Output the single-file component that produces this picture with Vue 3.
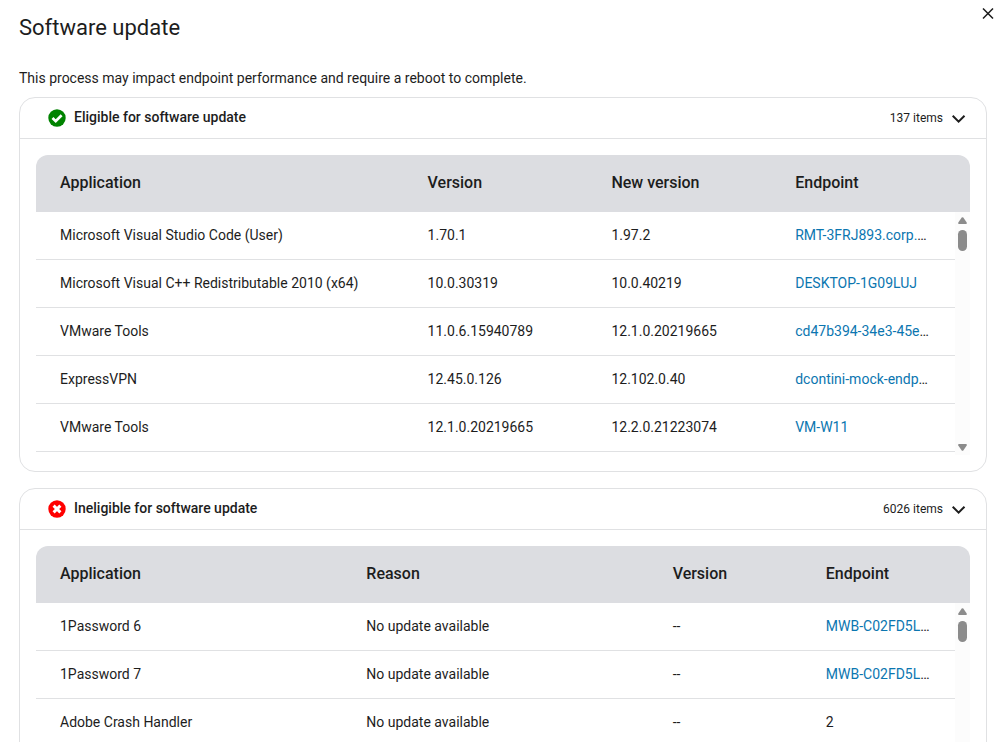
<script setup>
const sections = [
  {
    id: 'eligible',
    ok: true,
    title: 'Eligible for software update',
    count: '137 items',
    columns: [
      { label: 'Application', share: 40 },
      { label: 'Version', share: 20 },
      { label: 'New version', share: 20 },
      { label: 'Endpoint', share: 20 },
    ],
    rows: [
      { cells: ['Microsoft Visual Studio Code (User)', '1.70.1', '1.97.2'], link: 'RMT-3FRJ893.corp.', cut: true },
      { cells: ['Microsoft Visual C++ Redistributable 2010 (x64)', '10.0.30319', '10.0.40219'], link: 'DESKTOP-1G09LUJ' },
      { cells: ['VMware Tools', '11.0.6.15940789', '12.1.0.20219665'], link: 'cd47b394-34e3-45e', cut: true },
      { cells: ['ExpressVPN', '12.45.0.126', '12.102.0.40'], link: 'dcontini-mock-endp', cut: true },
      { cells: ['VMware Tools', '12.1.0.20219665', '12.2.0.21223074'], link: 'VM-W11' },
    ],
  },
  {
    id: 'ineligible',
    ok: false,
    title: 'Ineligible for software update',
    count: '6026 items',
    columns: [
      { label: 'Application', share: 33.333 },
      { label: 'Reason', share: 33.333 },
      { label: 'Version', share: 16.667 },
      { label: 'Endpoint', share: 16.667 },
    ],
    rows: [
      { cells: ['1Password 6', 'No update available', '--'], link: 'MWB-C02FD5L', cut: true },
      { cells: ['1Password 7', 'No update available', '--'], link: 'MWB-C02FD5L', cut: true },
      { cells: ['Adobe Crash Handler', 'No update available', '--', '2'] },
    ],
  },
]
</script>

<template>
  <main class="dialog">
    <header class="top">
      <h1>Software update</h1>
      <button class="close" type="button" aria-label="Close">
        <svg width="12" height="12" viewBox="0 0 12 12" aria-hidden="true">
          <path d="M1 .5L11 10.5M11 .5L1 10.5" fill="none" stroke="currentColor" stroke-width="1.5" />
        </svg>
      </button>
    </header>
    <p class="note">This process may impact endpoint performance and require a reboot to complete.</p>

    <section v-for="s in sections" :key="s.id" class="card" :aria-labelledby="s.id">
      <div class="bar">
        <svg class="status" width="18" height="18" viewBox="0 0 18 18" aria-hidden="true">
          <circle cx="9" cy="9" r="8.7" :fill="s.ok ? '#008300' : '#ff0000'" />
          <path v-if="s.ok" d="M4.5 9L7.7 12.1L13.6 6.2" fill="none" stroke="#fff" stroke-width="2.7" />
          <path v-else d="M5.6 5.6L12.4 12.4M12.4 5.6L5.6 12.4" fill="none" stroke="#fff" stroke-width="3" />
        </svg>
        <h2 :id="s.id">{{ s.title }}</h2>
        <button class="toggle" type="button">
          <span>{{ s.count }}</span>
          <svg width="14" height="10" viewBox="0 0 14 10" aria-hidden="true">
            <path d="M.7 1.7L6.6 7.6L12.5 1.7" fill="none" stroke="currentColor" stroke-width="2" />
          </svg>
        </button>
      </div>

      <div class="grid">
        <div class="main">
          <table>
            <colgroup>
              <col v-for="c in s.columns" :key="c.label" :style="{ width: c.share + '%' }" />
            </colgroup>
            <thead>
              <tr>
                <th v-for="c in s.columns" :key="c.label" scope="col">{{ c.label }}</th>
              </tr>
            </thead>
            <tbody>
              <tr v-for="(r, i) in s.rows" :key="i">
                <td v-for="(t, j) in r.cells" :key="j">{{ t }}</td>
                <td v-if="r.link"><a href="#">{{ r.link }}</a><span v-if="r.cut">…</span></td>
              </tr>
            </tbody>
          </table>
        </div>
        <div class="side" aria-hidden="true">
          <div class="corner"></div>
          <div class="rail">
            <svg width="9" height="7" viewBox="0 0 9 7"><path d="M3.7 .6Q4.5 -.2 5.3 .6L8.7 5.4Q9.2 7 8 7H1Q-.2 7 .3 5.4Z" fill="#8b8b8b" /></svg>
            <div class="thumb"></div>
            <svg class="down" width="9" height="7" viewBox="0 0 9 7"><path d="M3.7 6.4Q4.5 7.2 5.3 6.4L8.7 1.6Q9.2 0 8 0H1Q-.2 0 .3 1.6Z" fill="#8b8b8b" /></svg>
          </div>
        </div>
      </div>
    </section>
  </main>
</template>

<style>
body {
  background: #fff;
}
</style>

<style scoped>
.dialog {
  box-sizing: border-box;
  height: 100vh;
  overflow: hidden;
  padding: 0 13px 0 19px;
  font: 14px/20px Roboto, "Liberation Sans", sans-serif;
  color: #1d1d1d;
}
.top {
  display: flex;
  justify-content: space-between;
  align-items: flex-start;
}
h1 {
  margin: 12px 0 0;
  font-size: 22px;
  line-height: 32px;
  font-weight: 400;
}
button {
  padding: 0;
  border: 0;
  background: none;
  font: inherit;
  color: inherit;
  cursor: pointer;
}
.close {
  margin: 8px -7px 0 0;
  line-height: 0;
}
.note {
  margin: 24px 0 9px;
}
.card {
  margin-bottom: 16px;
  border: 1px solid #e0e1e3;
  border-radius: 16px;
}
.bar {
  display: flex;
  align-items: center;
  height: 40px;
  padding: 0 20px 0 28px;
  border-bottom: 1px solid #e0e1e3;
}
h2 {
  margin: 0 auto 2px 8px;
  font-size: 14px;
  font-weight: 500;
}
.toggle {
  display: flex;
  align-items: center;
  gap: 9px;
  font-size: 12px;
}
.toggle svg {
  margin-top: 2px;
}
.grid {
  display: flex;
  margin: 16px;
  min-height: 300px;
  border-radius: 12px 12px 0 0;
  overflow: hidden;
}
.main {
  flex: 1;
  min-width: 0;
}
table {
  width: 100%;
  table-layout: fixed;
  border-collapse: separate;
  border-spacing: 0;
}
th,
td {
  box-sizing: border-box;
  padding: 0 24px 2px;
  text-align: left;
  white-space: nowrap;
}
th {
  height: 57px;
  background: #dcdde1;
  font-size: 16px;
  font-weight: 500;
}
td {
  height: 48px;
  border-bottom: 1px solid #e0e1e3;
}
a {
  color: #0b76b0;
  text-decoration: none;
}
.side {
  display: flex;
  flex-direction: column;
  width: 15px;
}
.corner {
  height: 57px;
  background: #dcdde1;
}
.rail {
  flex: 1;
  display: flex;
  flex-direction: column;
  align-items: center;
  gap: 6px;
  padding: 5px 0 4px;
  background: #fcfcfc;
}
.thumb {
  width: 9px;
  height: 21px;
  border-radius: 5px;
  background: #8b8b8b;
}
.down {
  margin-top: auto;
}
</style>
